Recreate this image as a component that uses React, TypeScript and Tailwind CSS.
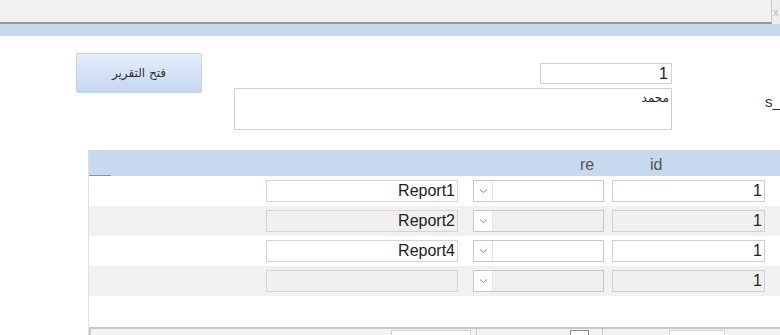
import React from "react";

const rows = [
  { report: "Report1", id: "1", alt: false },
  { report: "Report2", id: "1", alt: true },
  { report: "Report4", id: "1", alt: false },
  { report: "", id: "1", alt: true },
];

function Chevron() {
  return (
    <svg width="9" height="6" viewBox="0 0 9 6" fill="none">
      <path d="M1 1.5 L4.5 4.5 L8 1.5" stroke="#8a8a8a" strokeWidth="1" />
    </svg>
  );
}

export default function App() {
  return (
    <div
      className="w-[780px] h-[335px] overflow-hidden bg-white relative"
      style={{ fontFamily: '"Liberation Sans", Arial, sans-serif' }}
    >
      {/* top bar */}
      <div className="flex h-[24px]">
        <div className="w-[772px] h-[24px] bg-[#f1f1ef] border-b-2 border-r border-[#9a9a9a] border-r-[#c8c8c8]" />
        <div className="flex-1 bg-[#eeeeec] text-[#c0c0c0] text-[11px] leading-[24px] pl-[1px]">x</div>
      </div>
      <div className="h-[12px] bg-[#c6d9ef]" />

      {/* form area */}
      <div className="relative h-[114px]">
        <button
          className="absolute left-[76px] top-[17px] w-[126px] h-[40px] rounded-[2px] border border-[#c5d3e6] bg-gradient-to-b from-[#e6eefa] to-[#c4d7f0] text-[12px] text-[#333]"
          style={{ fontFamily: '"DejaVu Sans", "Noto Sans", sans-serif' }}
        >
          فتح التقرير
        </button>
        <div className="absolute left-[540px] top-[27px] w-[132px] h-[21px] border border-[#d0d0d0] bg-white text-right pr-[3px] text-[16px] leading-[19px] text-[#222]">
          1
        </div>
        <div
          className="absolute left-[234px] top-[52px] w-[438px] h-[42px] border border-[#d0d0d0] bg-white text-right pr-[2px] pt-[2px] text-[12px] leading-[14px] text-[#222]"
          style={{ fontFamily: '"DejaVu Sans", "Noto Sans", sans-serif' }}
        >
          محمد
        </div>
        <div className="absolute left-[765px] top-[55px] text-[15px] text-[#333]">s_</div>
      </div>

      {/* grid */}
      <div className="ml-[88px] border-l border-[#e0e0e0] h-[185px] flex flex-col relative">
        <div className="h-[26px] bg-[#c6d9ef] relative">
          <span className="absolute left-[491px] top-[3px] text-[16px] text-[#555]">re</span>
          <span className="absolute left-[561px] top-[3px] text-[16px] text-[#555]">id</span>
          <div className="absolute left-0 bottom-0 w-[22px] h-[1px] bg-[#8a96a8]" />
        </div>
        {rows.map((r, i) => (
          <div
            key={i}
            className={`h-[30px] flex items-center ${r.alt ? "bg-[#f1f1f1]" : "bg-white"}`}
          >
            <div
              className={`ml-[177px] w-[192px] h-[22px] border border-[#d4d4d4] text-right pr-[2px] text-[16px] leading-[20px] text-[#222] ${r.alt ? "bg-[#f0f0f0]" : "bg-white"}`}
            >
              {r.report}
            </div>
            <div
              className={`ml-[15px] w-[131px] h-[22px] border border-[#c8c8c8] flex ${r.alt ? "bg-[#f0f0f0]" : "bg-white"}`}
            >
              <div className="w-[19px] h-full bg-white border-r border-[#e4e4e4] flex items-center justify-center">
                <Chevron />
              </div>
            </div>
            <div
              className={`ml-[8px] w-[153px] h-[22px] border border-[#d0d0d0] text-right pr-[2px] text-[16px] leading-[20px] text-[#222] ${r.alt ? "bg-[#f0f0f0]" : "bg-white"}`}
            >
              {r.id}
            </div>
          </div>
        ))}
        <div className="flex-1" />
        <div className="h-[8px] bg-[#f3f3f3] border-t-2 border-l-2 border-[#c8c8c8] flex">
          <div className="w-[386px] relative border-r border-[#c8c8c8]">
            <div className="absolute left-[300px] top-[1px] w-[80px] h-[8px] border border-[#d0d0d0] bg-white" />
          </div>
          <div className="w-[126px] relative border-r border-[#c8c8c8]">
            <div className="absolute left-[93px] top-[1px] w-[19px] h-[8px] border border-[#8a8a8a] bg-white" />
          </div>
          <div className="flex-1 relative">
            <div className="absolute left-[66px] top-[1px] w-[56px] h-[8px] border border-[#d0d0d0] bg-white" />
          </div>
        </div>
      </div>
    </div>
  );
}
